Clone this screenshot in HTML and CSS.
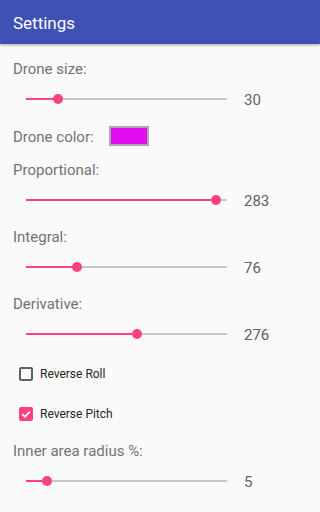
FILE: index.html
```html
<!DOCTYPE html>
<html>
<head>
<meta charset="utf-8">
<link rel="stylesheet" href="styles.css">
</head>
<body>
<header class="toolbar"><span class="title">Settings</span></header>
<main class="content">
  <div class="label first">Drone size:</div>
  <div class="slider-row">
    <div class="slider"><div class="fill" style="width:32px"></div><div class="thumb" style="left:32px"></div></div>
    <span class="value">30</span>
  </div>
  <div class="color-row">
    <span class="color-label">Drone color:</span>
    <span class="swatch"></span>
  </div>
  <div class="label section">Proportional:</div>
  <div class="slider-row">
    <div class="slider"><div class="fill" style="width:190px"></div><div class="thumb" style="left:190px"></div></div>
    <span class="value">283</span>
  </div>
  <div class="label">Integral:</div>
  <div class="slider-row">
    <div class="slider"><div class="fill" style="width:51px"></div><div class="thumb" style="left:51px"></div></div>
    <span class="value">76</span>
  </div>
  <div class="label">Derivative:</div>
  <div class="slider-row">
    <div class="slider"><div class="fill" style="width:111px"></div><div class="thumb" style="left:111px"></div></div>
    <span class="value">276</span>
  </div>
  <div class="check-row first-check">
    <span class="box"></span>
    <span class="check-text">Reverse Roll</span>
  </div>
  <div class="check-row">
    <span class="box checked"><svg viewBox="0 0 14 14" width="14" height="14"><path d="M3.2 7.2 L5.9 9.8 L10.9 4.6" fill="none" stroke="#fff" stroke-width="1.8"/></svg></span>
    <span class="check-text">Reverse Pitch</span>
  </div>
  <div class="label after-check">Inner area radius %:</div>
  <div class="slider-row">
    <div class="slider"><div class="fill" style="width:21px"></div><div class="thumb" style="left:21px"></div></div>
    <span class="value">5</span>
  </div>
</main>
</body>
</html>
```
FILE: styles.css
```css
html, body {
  margin: 0;
  padding: 0;
  background: #fafafa;
}
body {
  overflow: hidden;
  font-family: Roboto, "Liberation Sans", sans-serif;
}
.toolbar {
  height: 44px;
  background: #3f51b5;
  box-shadow: 0 1px 3px rgba(0, 0, 0, 0.35);
  display: flex;
  align-items: center;
  padding-left: 13px;
  position: relative;
}
.title {
  color: #fff;
  font-size: 17px;
  font-weight: 400;
  line-height: 20px;
  margin-top: 1px;
}
.content {
  display: flex;
  flex-direction: column;
}
.label {
  font-size: 15px;
  line-height: 20px;
  color: #737373;
  padding-left: 13px;
  margin-top: 8px;
}
.label.first {
  margin-top: 15px;
}
.label.section {
  margin-top: 14px;
}
.label.after-check {
  margin-top: 7px;
}
.slider-row {
  height: 39px;
  display: flex;
  align-items: center;
}
.slider {
  margin-left: 26px;
  width: 201px;
  height: 2px;
  background: #c8c8c8;
  position: relative;
}
.fill {
  height: 2px;
  background: #ff4081;
}
.thumb {
  position: absolute;
  top: -4px;
  width: 10px;
  height: 10px;
  margin-left: -5px;
  border-radius: 50%;
  background: #ff4081;
}
.value {
  margin-left: 17px;
  font-size: 15px;
  color: #616161;
  line-height: 20px;
  margin-top: 2px;
}
.color-row {
  margin-top: 8px;
  height: 20px;
  display: flex;
  align-items: center;
  padding-left: 13px;
}
.color-label {
  font-size: 15px;
  line-height: 20px;
  color: #737373;
  margin-top: 2px;
}
.swatch {
  margin-left: 15px;
  width: 36px;
  height: 16px;
  background: #e10cf0;
  border: 2px solid #a8a8a8;
}
.check-row {
  height: 40px;
  display: flex;
  align-items: center;
  padding-left: 19px;
}
.check-row.first-check {
  margin-top: 1px;
}
.box {
  width: 10px;
  height: 10px;
  border: 2px solid #616161;
  border-radius: 2px;
}
.box.checked {
  width: 14px;
  height: 14px;
  border: none;
  background: #ff4081;
}
.box svg {
  display: block;
}
.check-text {
  margin-left: 7px;
  font-size: 12px;
  color: #262626;
  line-height: 16px;
}
```
